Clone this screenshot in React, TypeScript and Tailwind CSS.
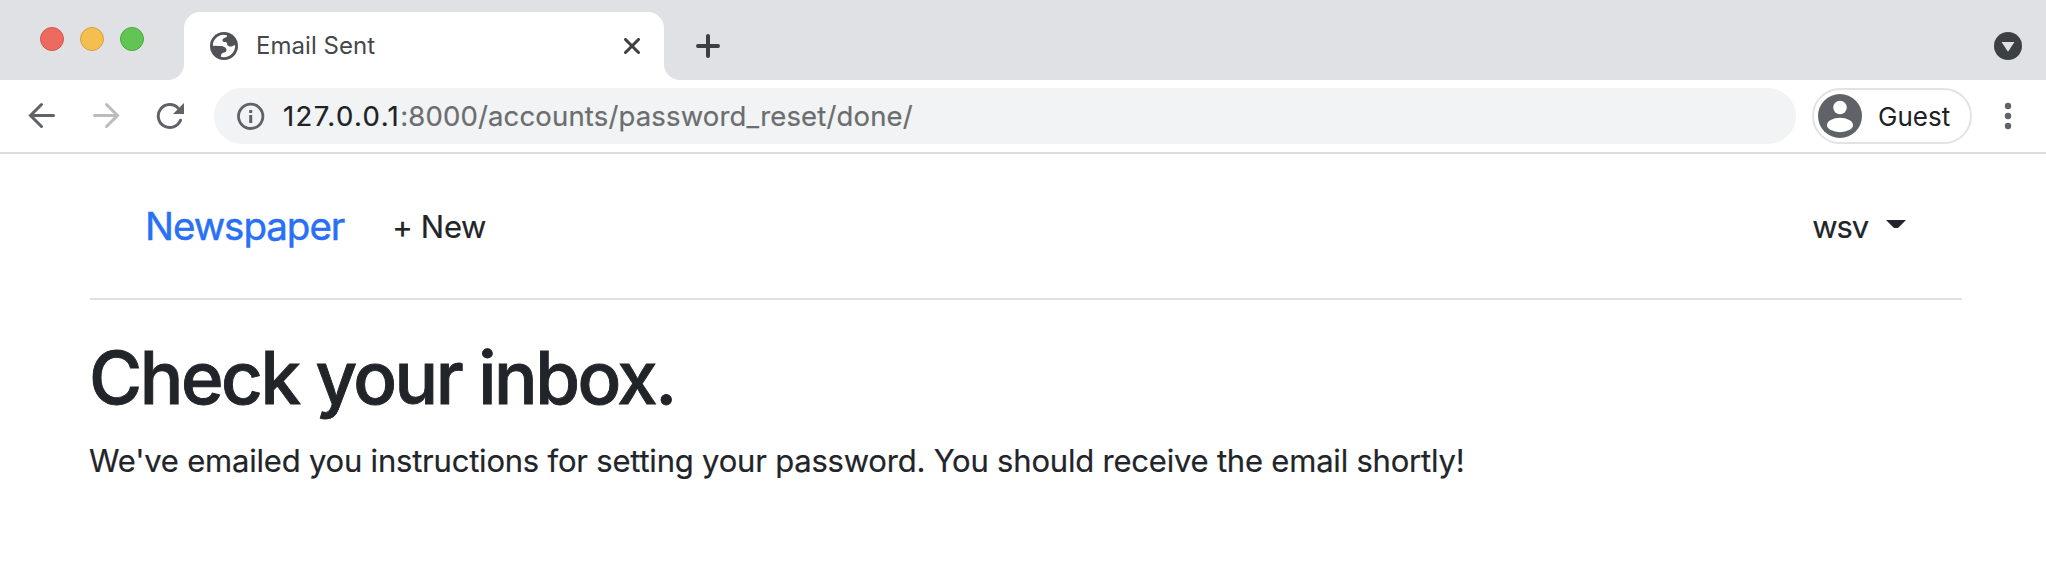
import React from "react";

const TrafficLight = ({ className }: { className: string }) => (
  <span className={`size-6 rounded-full border ${className}`} />
);

const Flare = ({ d }: { d: string }) => (
  <svg className="size-4 self-end" viewBox="0 0 16 16">
    <path d={d} fill="#fff" />
  </svg>
);

function TabStrip() {
  return (
    <div className="flex h-20 bg-[#dfe1e5]">
      <div className="flex w-[168px] shrink-0 items-start gap-4 pl-10 pt-[27px]">
        <TrafficLight className="border-[#d5564c] bg-[#ed6a5e]" />
        <TrafficLight className="border-[#d9a13f] bg-[#f5bf4f]" />
        <TrafficLight className="border-[#4ea73f] bg-[#61c554]" />
      </div>
      <Flare d="M16 0V16H0A16 16 0 0 0 16 0Z" />
      <div className="mt-3 flex h-[68px] w-[480px] rounded-t-[16px] bg-white pl-[26px] pt-5">
        <svg className="size-7 shrink-0" viewBox="0 0 28 28">
          <circle cx="14" cy="14" r="14" fill="#505257" />
          <path
            d="M2.800 13.700C2.900 8 7.500 3 13.500 2.800L17 3.300C17.200 5.500 15.500 5.300 13.500 6.500C12 7.500 12.300 9 13.300 9.700C15 10.300 16.800 9.500 17 11.500C17 14 19.500 14.800 21.500 14.500C23.200 14 24 12.500 25.200 13.500C25.300 20 20 25.600 13 25.200L10.800 24.700C11 23 11.200 21.500 13 20.800C15 20.600 16.800 19.800 16.500 17.500C15.800 15 13.500 14 11 13.900Z"
            fill="#fff"
          />
        </svg>
        <span className="ml-[18px] mt-[-1px] flex-1 whitespace-nowrap text-[24px] leading-[30px] tracking-[0.05px] text-[#45474a]">
          Email Sent
        </span>
        <svg className="mr-6 mt-[6px] size-4" viewBox="0 0 16 16">
          <path d="M1.500 1.500L14.500 14.500M14.500 1.500L1.500 14.500" stroke="#3c4043" strokeWidth="3" strokeLinecap="round" />
        </svg>
      </div>
      <Flare d="M0 0V16H16A16 16 0 0 1 0 0Z" />
      <svg className="ml-4 mt-[34px] size-6" viewBox="0 0 24 24">
        <path d="M2 12H22M12 2V22" stroke="#3c4043" strokeWidth="4" strokeLinecap="round" />
      </svg>
      <svg className="ml-auto mr-6 mt-8 size-7" viewBox="0 0 28 28">
        <circle cx="14" cy="14" r="14" fill="#3c4043" />
        <path d="M7.500 10H20.500L14 19.700Z" fill="#dfe1e5" />
      </svg>
    </div>
  );
}

function Toolbar() {
  return (
    <div className="flex h-[74px] items-start border-b-2 border-[#dadce0] bg-white pt-2">
      <svg className="ml-7 mt-[13px] h-[30px] w-7 shrink-0" viewBox="0 0 28 30">
        <path d="M25.500 14.500H3M13.500 3.500L2.500 14.500L13.500 25.500" fill="none" stroke="#5f6368" strokeWidth="3" strokeLinecap="round" />
      </svg>
      <svg className="ml-9 mt-[13px] h-[30px] w-7 shrink-0" viewBox="0 0 28 30">
        <path d="M2.500 14.500H25M14.500 3.500L25.500 14.500L14.500 25.500" fill="none" stroke="#babcbe" strokeWidth="3" strokeLinecap="round" />
      </svg>
      <svg className="ml-9 mt-[14px] size-7 shrink-0" viewBox="0 0 28 28">
        <path d="M24.500 18.200A11.500 11.500 0 1 1 22.200 6.200" fill="none" stroke="#5f6368" strokeWidth="3" strokeLinecap="round" />
        <path d="M28 1V12H17Z" fill="#5f6368" />
      </svg>
      <div className="ml-[30px] flex h-14 w-[1582px] shrink-0 items-center rounded-full bg-[#f1f3f4] pl-[23px]">
        <svg className="size-7 shrink-0" viewBox="0 0 28 28">
          <circle cx="13.700" cy="14.300" r="12.200" fill="none" stroke="#5f6368" strokeWidth="2.800" />
          <path d="M12.200 8H15.200V11H12.200ZM12.200 13H15.200V21H12.200Z" fill="#5f6368" />
        </svg>
        <span className="ml-[18px] mt-[-1px] whitespace-nowrap text-[27.5px] leading-8 tracking-[0.16px] text-[#6b6d6f] [-webkit-text-stroke:0.2px]">
          <span className="tracking-[1.4px] text-[#202124]">127.0.0.1</span>:8000/accounts/password_reset/done/
        </span>
      </div>
      <div className="ml-4 flex h-14 w-40 shrink-0 items-center rounded-full border-2 border-[#e3e3e4] pl-1">
        <svg className="size-11 shrink-0" viewBox="0 0 44 44">
          <circle cx="22" cy="22" r="22" fill="#5f6368" />
          <circle cx="22" cy="13.500" r="6.800" fill="#fff" />
          <ellipse cx="22" cy="31" rx="13" ry="7.200" fill="#fff" />
        </svg>
        <span className="ml-4 mt-[2px] text-[26px] leading-8 text-[#202124]">Guest</span>
      </div>
      <svg className="ml-8 mt-[14px] h-7 w-2 shrink-0" viewBox="0 0 8 28">
        <circle cx="4" cy="4" r="3.200" fill="#5f6368" />
        <circle cx="4" cy="14" r="3.200" fill="#5f6368" />
        <circle cx="4" cy="24" r="3.200" fill="#5f6368" />
      </svg>
    </div>
  );
}

export default function App() {
  return (
    <div className="h-[574px] w-[2046px] overflow-hidden bg-white font-['Inter','Liberation_Sans',sans-serif]">
      <TabStrip />
      <Toolbar />
      <div className="ml-[90px] w-[1872px] text-[31px] text-[#212529] [-webkit-text-stroke:0.2px]">
        <header className="flex h-[146px] items-center border-b-2 border-[#dee2e6] pl-[55px] pr-[54px]">
          <a className="text-[38.5px] leading-[60px] tracking-[-1.05px] text-[#2970f6] [-webkit-text-stroke:0.5px]">Newspaper</a>
          <a className="ml-12 mt-[2px] leading-[48px] tracking-[-0.3px]">+ New</a>
          <a className="ml-auto mt-[2px] leading-[48px] tracking-[-1.1px]">wsv</a>
          <svg className="mb-1 ml-[18px] mr-[2px] h-2 w-5" viewBox="0 0 20 8">
            <path d="M0 0H20L12 8H8Z" fill="#212529" />
          </svg>
        </header>
        <h1 className="ml-[-1px] mt-[33px] text-[72.5px] font-medium leading-[90px] tracking-[-2.45px] [-webkit-text-stroke:0.9px]">
          Check your inbox.
        </h1>
        <p className="ml-[-1px] mt-[14px] whitespace-nowrap leading-[48px] tracking-[-0.21px]">
          We've emailed you instructions for setting your password. You should receive the email shortly!
        </p>
      </div>
    </div>
  );
}
